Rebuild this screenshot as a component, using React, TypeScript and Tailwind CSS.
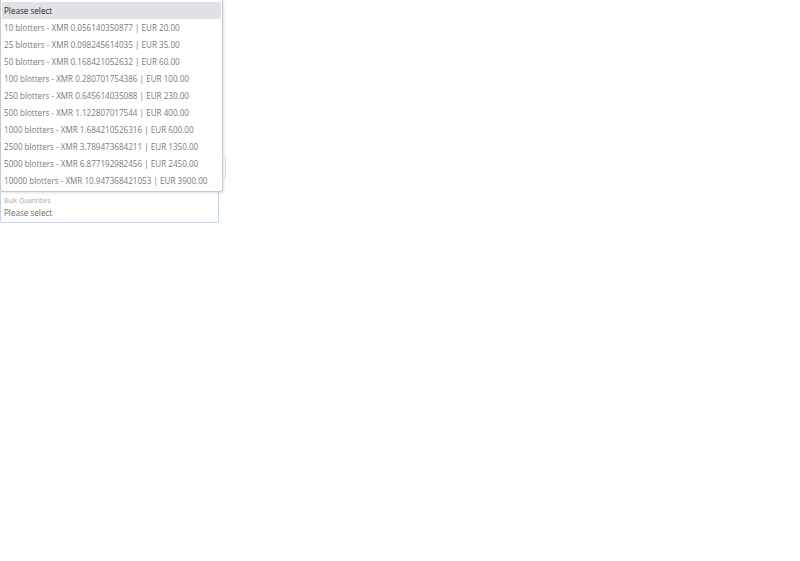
import React from "react";

const OPTIONS = [
  "10 blotters - XMR 0.056140350877 | EUR 20.00",
  "25 blotters - XMR 0.098245614035 | EUR 35.00",
  "50 blotters - XMR 0.168421052632 | EUR 60.00",
  "100 blotters - XMR 0.280701754386 | EUR 100.00",
  "250 blotters - XMR 0.645614035088 | EUR 230.00",
  "500 blotters - XMR 1.122807017544 | EUR 400.00",
  "1000 blotters - XMR 1.684210526316 | EUR 600.00",
  "2500 blotters - XMR 3.789473684211 | EUR 1350.00",
  "5000 blotters - XMR 6.877192982456 | EUR 2450.00",
  "10000 blotters - XMR 10.947368421053 | EUR 3900.00",
];

export default function App() {
  return (
    <div className="relative h-[561px] w-[800px] bg-white font-['Open_Sans',sans-serif] text-[8.1px]">
      <div className="flex w-[226px] flex-col pt-[155px]">
        {/* field hidden behind the open list */}
        <div className="h-[23px] w-[226px] rounded-[2px] border border-[#e4e4e4]" />
        <div className="mt-[13px] flex h-[32px] w-[219px] flex-col justify-center rounded-[2px] border border-[#bcd3f2] px-[3px]">
          <span className="text-[6.5px] leading-[10px] text-[#a8a8a8]">
            Bulk Quantities
          </span>
          <span className="leading-[13px] text-[#6b6b6b]">Please select</span>
        </div>
      </div>

      <ul className="absolute left-0 top-0 w-[223px] rounded-b-[3px] border border-t-0 border-[#c9c9c9] bg-white px-[1px] pb-[2px] pt-[2px] shadow-[1px_1px_3px_rgba(0,0,0,0.12)]">
        <li className="flex h-[17px] items-center whitespace-nowrap rounded-[1px] bg-[#e1e1e6] px-[2px] pt-[1px] text-[#2a2a2a]">
          Please select
        </li>
        {OPTIONS.map((o) => (
          <li
            key={o}
            className="flex h-[17px] items-center whitespace-nowrap px-[2px] pt-[2px] text-[#7a7a7a]"
          >
            {o}
          </li>
        ))}
      </ul>
    </div>
  );
}
